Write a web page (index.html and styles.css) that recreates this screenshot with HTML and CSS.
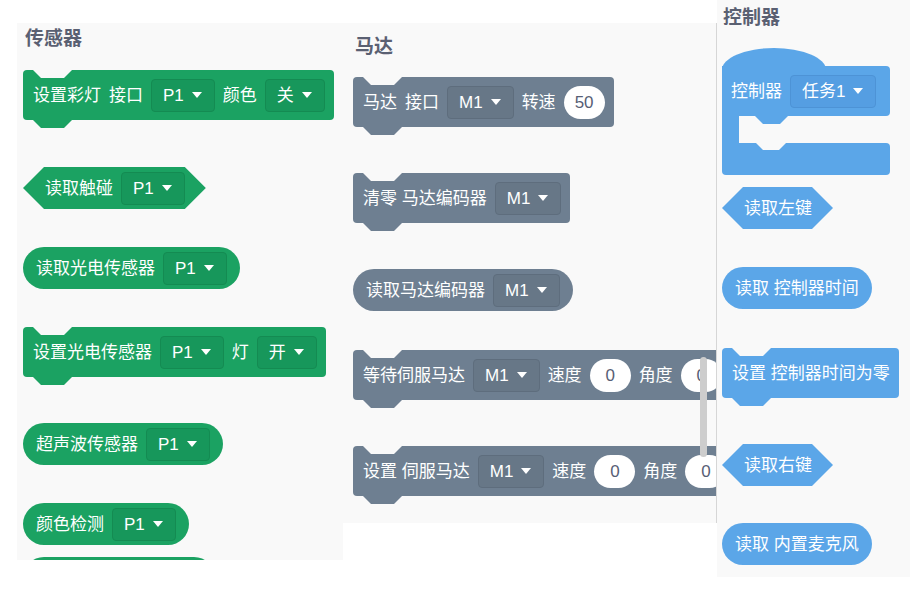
FILE: index.html
```html
<!doctype html>
<html>
  <head>
    <meta charset='utf-8'>
    <title>Blocks</title>
    <link rel="stylesheet" href="styles.css">
  </head>
  <body>
    <div class="stage">

      <div class="panel sensors">
        <h3 class="title">传感器</h3>
        <div class="block stack green sp-a">
          <span>设置彩灯</span><span>接口</span>
          <span class="drop">P1<i class="caret"></i></span>
          <span>颜色</span>
          <span class="drop">关<i class="caret"></i></span>
        </div>
        <div class="block bool green sp-47">
          <span>读取触碰</span>
          <span class="drop">P1<i class="caret"></i></span>
        </div>
        <div class="block round green sp-38">
          <span>读取光电传感器</span>
          <span class="drop">P1<i class="caret"></i></span>
        </div>
        <div class="block stack green sp-38">
          <span>设置光电传感器</span>
          <span class="drop">P1<i class="caret"></i></span>
          <span>灯</span>
          <span class="drop">开<i class="caret"></i></span>
        </div>
        <div class="block round green sp-46">
          <span>超声波传感器</span>
          <span class="drop">P1<i class="caret"></i></span>
        </div>
        <div class="block round green sp-38">
          <span>颜色检测</span>
          <span class="drop">P1<i class="caret"></i></span>
        </div>
        <div class="block round green sp-12 peek"></div>
      </div>

      <div class="panel motor">
        <h3 class="title">马达</h3>
        <div class="block stack slate sp-b">
          <span>马达</span><span>接口</span>
          <span class="drop">M1<i class="caret"></i></span>
          <span>转速</span>
          <span class="num">50</span>
        </div>
        <div class="block stack slate sp-46">
          <span>清零 马达编码器</span>
          <span class="drop">M1<i class="caret"></i></span>
        </div>
        <div class="block round slate sp-46">
          <span>读取马达编码器</span>
          <span class="drop">M1<i class="caret"></i></span>
        </div>
        <div class="block stack slate sp-39">
          <span>等待伺服马达</span>
          <span class="drop">M1<i class="caret"></i></span>
          <span>速度</span>
          <span class="num">0</span>
          <span>角度</span>
          <span class="num">0</span>
        </div>
        <div class="block stack slate sp-46">
          <span>设置 伺服马达</span>
          <span class="drop">M1<i class="caret"></i></span>
          <span>速度</span>
          <span class="num">0</span>
          <span>角度</span>
          <span class="num">0</span>
        </div>
        <div class="scrollbar"></div>
      </div>

      <div class="panel ctrl">
        <h3 class="title">控制器</h3>
        <div class="cblock">
          <div class="c-head">
            <span>控制器</span>
            <span class="drop">任务1<i class="caret"></i></span>
          </div>
          <div class="c-arm"></div>
          <div class="c-foot"></div>
        </div>
        <div class="block bool blue sp-12">
          <span>读取左键</span>
        </div>
        <div class="block round blue sp-38">
          <span>读取 控制器时间</span>
        </div>
        <div class="block stack blue sp-39">
          <span>设置 控制器时间为零</span>
        </div>
        <div class="block bool blue sp-46">
          <span>读取右键</span>
        </div>
        <div class="block round blue sp-37">
          <span>读取 内置麦克风</span>
        </div>
      </div>

    </div>
  </body>
</html>
```

FILE: styles.css
```css
body {
  margin: 0;
  background: #fff;
  font-family: 'Liberation Sans', 'Noto Sans CJK SC', sans-serif;
  overflow: hidden;
}

.stage {
  display: flex;
  align-items: flex-start;
  width: 910px;
  height: 600px;
}

/* flyout panels */
.panel {
  position: relative;
  display: flex;
  flex-direction: column;
  align-items: flex-start;
  background: #f9f9f9;
  overflow: hidden;
  box-sizing: border-box;
}
.sensors {
  margin: 23px 0 0 17px;
  width: 326px;
  height: 537px;
  padding-left: 6px;
}
.motor {
  margin-top: 23px;
  width: 374px;
  height: 500px;
  padding-left: 10px;
  border-right: 1px solid #d6d6d6;
}
.ctrl {
  width: 193px;
  height: 577px;
  padding-left: 5px;
}

.title {
  margin: 0 0 0 2px;
  font-family: 'Noto Sans CJK SC', serif;
  font-size: 19px;
  font-weight: 700;
  line-height: 24px;
  color: #5a6072;
}
.sensors .title { margin-top: 2px; }
.motor .title { margin-top: 10px; }
.ctrl .title { margin-top: 4px; margin-left: 1px; }

/* vertical spacing between blocks */
.sp-a { margin-top: 21px; }
.sp-b { margin-top: 20px; }
.sp-12 { margin-top: 12px; }
.sp-37 { margin-top: 37px; }
.sp-38 { margin-top: 38px; }
.sp-39 { margin-top: 39px; }
.sp-46 { margin-top: 46px; }
.sp-47 { margin-top: 47px; }

/* blocks */
.green { --c: #1ba262; --d: #17975b; --e: #148b52; }
.slate { --c: #6e7f91; --d: #677787; --e: #5e6d7d; }
.blue  { --c: #5ba6e8; --d: #559ee2; --e: #4d93d6; }

.block {
  position: relative;
  flex: none;
  display: inline-flex;
  align-items: center;
  gap: 8px;
  box-sizing: border-box;
  white-space: nowrap;
  color: #fff;
  font-size: 17px;
  line-height: 1;
  background: var(--c);
}
.stack {
  height: 50px;
  padding: 0 9px 0 10px;
  border-radius: 4px;
}
.stack::before,
.stack::after {
  content: '';
  position: absolute;
  left: 10px;
  width: 39px;
  height: 8px;
  clip-path: polygon(0 0, 100% 0, calc(100% - 8px) 100%, 8px 100%);
}
.stack::before {
  top: 0;
  background: #f9f9f9;
}
.stack::after {
  top: 100%;
  background: var(--c);
}
.bool {
  height: 42px;
  padding: 0 21px 0 22px;
  clip-path: polygon(0 50%, 21px 0, calc(100% - 21px) 0, 100% 50%, calc(100% - 21px) 100%, 21px 100%);
}
.round {
  height: 42px;
  padding: 0 13px;
  border-radius: 21px;
}
.peek {
  width: 192px;
}

.drop {
  display: inline-flex;
  align-items: center;
  gap: 8px;
  height: 33px;
  padding: 1px 12px 0 11px;
  box-sizing: border-box;
  border: 1px solid var(--e);
  border-radius: 4px;
  background: var(--d);
  line-height: 1;
}
.caret {
  width: 0;
  height: 0;
  margin-top: -1px;
  border-left: 5px solid transparent;
  border-right: 5px solid transparent;
  border-top: 6px solid #fff;
}
.num {
  display: inline-flex;
  align-items: center;
  justify-content: center;
  min-width: 41px;
  height: 33px;
  padding: 1px 8px 0;
  box-sizing: border-box;
  border-radius: 17px;
  background: #fff;
  color: #575e75;
}

/* hat c-block */
.cblock {
  --c: #5ba6e8;
  margin-top: 38px;
  width: 168px;
}
.c-head {
  position: relative;
  z-index: 0;
  display: flex;
  align-items: center;
  gap: 8px;
  height: 50px;
  padding-left: 9px;
  color: #fff;
  font-size: 17px;
  line-height: 1;
  background: var(--c);
  border-radius: 0 4px 4px 0;
}
.c-head .drop {
  --d: #559ee2;
  --e: #4d93d6;
}
.c-head::before {
  content: '';
  position: absolute;
  z-index: -1;
  left: 0;
  top: -18px;
  width: 104px;
  height: 44px;
  border-radius: 50%;
  background: var(--c);
}
.c-head::after {
  content: '';
  position: absolute;
  left: 33px;
  top: 100%;
  width: 33px;
  height: 8px;
  background: var(--c);
  clip-path: polygon(0 0, 100% 0, calc(100% - 8px) 100%, 8px 100%);
}
.c-arm {
  width: 17px;
  height: 27px;
  background: var(--c);
}
.c-foot {
  position: relative;
  height: 32px;
  background: var(--c);
  border-radius: 0 4px 4px 4px;
}
.c-foot::before {
  content: '';
  position: absolute;
  left: 34px;
  top: 0;
  width: 30px;
  height: 7px;
  background: #f9f9f9;
  clip-path: polygon(0 0, 100% 0, calc(100% - 7px) 100%, 7px 100%);
}

.scrollbar {
  position: absolute;
  left: 357px;
  top: 334px;
  width: 7px;
  height: 100px;
  border-radius: 4px;
  background: #cdcdcd;
}
```
